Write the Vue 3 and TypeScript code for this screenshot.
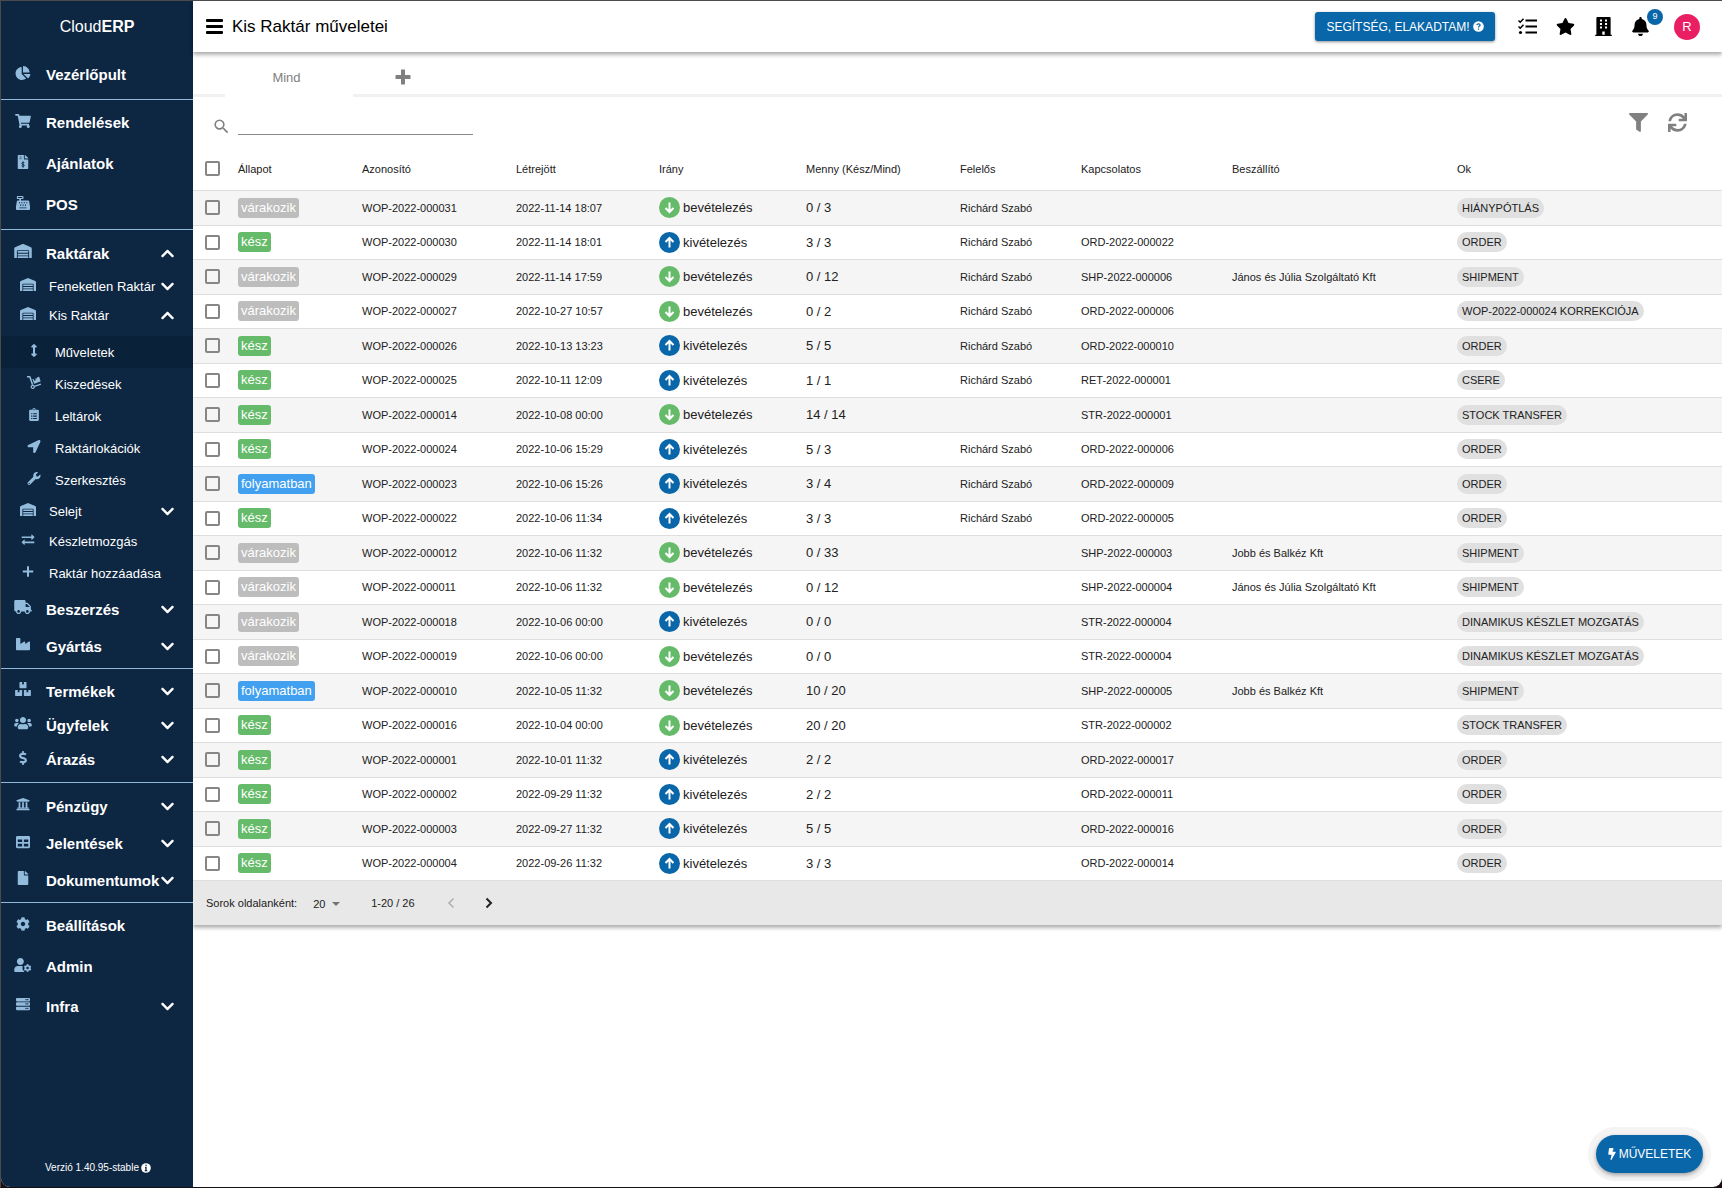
<script setup lang="ts">
import { ref } from 'vue'

interface NavItem {
  label: string
  icon: string
  level?: 1 | 2 | 3
  size: 28 | 30 | 32 | 34 | 36 | 37 | 38 | 41
  chevron?: 'up' | 'down'
  active?: boolean
  first?: boolean
}

interface Operation {
  state: 'várakozik' | 'kész' | 'folyamatban'
  id: string
  created: string
  dir: 'in' | 'out'
  qty: string
  owner: string
  related: string
  supplier: string
  reason: string
}

const sections: { roomy: boolean; items: NavItem[] }[] = [
  { roomy: false, items: [{ label: 'Vezérlőpult', icon: 'pie', size: 41 }] },
  {
    roomy: false,
    items: [
      { label: 'Rendelések', icon: 'cart', size: 41 },
      { label: 'Ajánlatok', icon: 'invoice', size: 41 },
      { label: 'POS', icon: 'register', size: 41 },
    ],
  },
  {
    roomy: true,
    items: [
      { label: 'Raktárak', icon: 'warehouse', size: 38, chevron: 'up' },
      { label: 'Feneketlen Raktár', icon: 'warehouse', level: 2, size: 28, chevron: 'down' },
      { label: 'Kis Raktár', icon: 'warehouse', level: 2, size: 30, chevron: 'up' },
      { label: 'Műveletek', icon: 'arrows-v', level: 3, size: 32, active: true, first: true },
      { label: 'Kiszedések', icon: 'dolly', level: 3, size: 32 },
      { label: 'Leltárok', icon: 'clipboard', level: 3, size: 32 },
      { label: 'Raktárlokációk', icon: 'location', level: 3, size: 32 },
      { label: 'Szerkesztés', icon: 'wrench', level: 3, size: 32 },
      { label: 'Selejt', icon: 'warehouse', level: 2, size: 30, chevron: 'down' },
      { label: 'Készletmozgás', icon: 'exchange', level: 2, size: 30 },
      { label: 'Raktár hozzáadása', icon: 'plus-thin', level: 2, size: 34 },
      { label: 'Beszerzés', icon: 'truck', size: 38, chevron: 'down' },
      { label: 'Gyártás', icon: 'industry', size: 36, chevron: 'down' },
    ],
  },
  {
    roomy: true,
    items: [
      { label: 'Termékek', icon: 'boxes', size: 36, chevron: 'down' },
      { label: 'Ügyfelek', icon: 'users', size: 32, chevron: 'down' },
      { label: 'Árazás', icon: 'dollar', size: 37, chevron: 'down' },
    ],
  },
  {
    roomy: true,
    items: [
      { label: 'Pénzügy', icon: 'bank', size: 38, chevron: 'down' },
      { label: 'Jelentések', icon: 'table', size: 37, chevron: 'down' },
      { label: 'Dokumentumok', icon: 'file', size: 36, chevron: 'down' },
    ],
  },
  {
    roomy: false,
    items: [
      { label: 'Beállítások', icon: 'cog', size: 41 },
      { label: 'Admin', icon: 'user-cog', size: 41 },
      { label: 'Infra', icon: 'server', size: 36, chevron: 'down' },
    ],
  },
]

const stateClass = { várakozik: 'waiting', kész: 'done', folyamatban: 'progress' }

function op(
  state: Operation['state'], num: string, created: string, dir: Operation['dir'], qty: string,
  owned: boolean, related: string, supplier: string, reason: string,
): Operation {
  return { state, id: `WOP-2022-0000${num}`, created, dir, qty, owner: owned ? 'Richárd Szabó' : '', related, supplier, reason }
}

const rows: Operation[] = [
  op('várakozik', '31', '2022-11-14 18:07', 'in', '0 / 3', true, '', '', 'HIÁNYPÓTLÁS'),
  op('kész', '30', '2022-11-14 18:01', 'out', '3 / 3', true, 'ORD-2022-000022', '', 'ORDER'),
  op('várakozik', '29', '2022-11-14 17:59', 'in', '0 / 12', true, 'SHP-2022-000006', 'János és Júlia Szolgáltató Kft', 'SHIPMENT'),
  op('várakozik', '27', '2022-10-27 10:57', 'in', '0 / 2', true, 'ORD-2022-000006', '', 'WOP-2022-000024 KORREKCIÓJA'),
  op('kész', '26', '2022-10-13 13:23', 'out', '5 / 5', true, 'ORD-2022-000010', '', 'ORDER'),
  op('kész', '25', '2022-10-11 12:09', 'out', '1 / 1', true, 'RET-2022-000001', '', 'CSERE'),
  op('kész', '14', '2022-10-08 00:00', 'in', '14 / 14', false, 'STR-2022-000001', '', 'STOCK TRANSFER'),
  op('kész', '24', '2022-10-06 15:29', 'out', '5 / 3', true, 'ORD-2022-000006', '', 'ORDER'),
  op('folyamatban', '23', '2022-10-06 15:26', 'out', '3 / 4', true, 'ORD-2022-000009', '', 'ORDER'),
  op('kész', '22', '2022-10-06 11:34', 'out', '3 / 3', true, 'ORD-2022-000005', '', 'ORDER'),
  op('várakozik', '12', '2022-10-06 11:32', 'in', '0 / 33', false, 'SHP-2022-000003', 'Jobb és Balkéz Kft', 'SHIPMENT'),
  op('várakozik', '11', '2022-10-06 11:32', 'in', '0 / 12', false, 'SHP-2022-000004', 'János és Júlia Szolgáltató Kft', 'SHIPMENT'),
  op('várakozik', '18', '2022-10-06 00:00', 'out', '0 / 0', false, 'STR-2022-000004', '', 'DINAMIKUS KÉSZLET MOZGATÁS'),
  op('várakozik', '19', '2022-10-06 00:00', 'in', '0 / 0', false, 'STR-2022-000004', '', 'DINAMIKUS KÉSZLET MOZGATÁS'),
  op('folyamatban', '10', '2022-10-05 11:32', 'in', '10 / 20', false, 'SHP-2022-000005', 'Jobb és Balkéz Kft', 'SHIPMENT'),
  op('kész', '16', '2022-10-04 00:00', 'in', '20 / 20', false, 'STR-2022-000002', '', 'STOCK TRANSFER'),
  op('kész', '01', '2022-10-01 11:32', 'out', '2 / 2', false, 'ORD-2022-000017', '', 'ORDER'),
  op('kész', '02', '2022-09-29 11:32', 'out', '2 / 2', false, 'ORD-2022-000011', '', 'ORDER'),
  op('kész', '03', '2022-09-27 11:32', 'out', '5 / 5', false, 'ORD-2022-000016', '', 'ORDER'),
  op('kész', '04', '2022-09-26 11:32', 'out', '3 / 3', false, 'ORD-2022-000014', '', 'ORDER'),
]

const columns = ['Állapot', 'Azonosító', 'Létrejött', 'Irány', 'Menny (Kész/Mind)', 'Felelős', 'Kapcsolatos', 'Beszállító', 'Ok']

const selected = ref<string[]>([])
const search = ref('')
const pageSize = ref('20')

function toggleAll(e: Event) {
  selected.value = (e.target as HTMLInputElement).checked ? rows.map((r) => r.id) : []
}
</script>

<template>
  <svg class="sprite" aria-hidden="true">
    <symbol id="pie" viewBox="0 0 544 512"><path d="M527.79 288H290.5l158.03 158.03c6.04 6.04 15.98 6.53 22.19.68 38.7-36.46 65.32-85.61 73.13-140.86 1.34-9.46-6.51-17.85-16.06-17.85zm-15.83-64.8C503.72 103.74 408.26 8.28 288.8.04 279.68-.59 272 7.1 272 16.24V240h223.77c9.14 0 16.82-7.68 16.19-16.8zM224 288V50.71c0-9.55-8.39-17.4-17.84-16.06C86.99 51.49-4.1 155.6.14 280.37 4.5 408.51 114.83 513.59 243.03 511.98c50.4-.63 96.97-16.87 135.26-44.03 7.9-5.6 8.42-17.23 1.57-24.08L224 288z" /></symbol>
    <symbol id="cart" viewBox="0 0 576 512"><path d="M528.12 301.319l47.273-208C578.806 78.301 567.391 64 551.99 64H159.208l-9.166-44.81C147.758 8.021 137.93 0 126.529 0H24C10.745 0 0 10.745 0 24v16c0 13.255 10.745 24 24 24h69.883l70.248 343.435C147.325 417.1 136 435.222 136 456c0 30.928 25.072 56 56 56s56-25.072 56-56c0-15.674-6.447-29.835-16.824-40h209.647C430.447 426.165 424 440.326 424 456c0 30.928 25.072 56 56 56s56-25.072 56-56c0-22.172-12.888-41.332-31.579-50.405l5.517-24.276c3.413-15.018-8.002-29.319-23.403-29.319H218.117l-6.545-32h293.145c11.206 0 20.92-7.754 23.403-18.681z" /></symbol>
    <symbol id="invoice" viewBox="0 0 384 512">
      <path d="M224 136V0H24C10.7 0 0 10.7 0 24v464c0 13.3 10.7 24 24 24h336c13.3 0 24-10.7 24-24V160H248c-13.2 0-24-10.8-24-24zm160-14.1v6.1H256V0h6.1c6.4 0 12.5 2.5 17 7l97.9 98c4.5 4.5 7 10.6 7 16.9z" />
      <path d="M64 72h80M64 136h80" stroke="#0d2642" stroke-width="20" />
      <path d="M192 232v232M240 290c-20-18-92-22-92 20 0 48 92 24 92 72 0 42-72 40-98 14" fill="none" stroke="#0d2642" stroke-width="34" />
    </symbol>
    <symbol id="register" viewBox="0 0 512 512"><path fill-rule="evenodd" d="M48 0h208c9 0 16 7 16 16v80c0 9-7 16-16 16h-72v48h264c16 0 29 11 32 27l31 189c1 3 1 5 1 8v96c0 18-14 32-32 32H32c-18 0-32-14-32-32v-96c0-3 0-5 1-8l31-189c3-16 16-27 32-27h56v-48H48c-9 0-16-7-16-16V16C32 7 39 0 48 0zm24 40v32h160V40zm36 184v40h40v-40zm88 0v40h40v-40zm88 0v40h40v-40zm88 0v40h40v-40zM150 312v40h40v-40zm88 0v40h40v-40zm88 0v40h40v-40zM128 416v32h256v-32z" /></symbol>
    <symbol id="warehouse" viewBox="0 0 640 512"><path d="M504 352H136.4c-4.4 0-8 3.6-8 8l-.1 48c0 4.4 3.6 8 8 8H504c4.4 0 8-3.6 8-8v-48c0-4.4-3.6-8-8-8zm0 96H136.1c-4.4 0-8 3.6-8 8l-.1 48c0 4.4 3.6 8 8 8h368c4.4 0 8-3.6 8-8v-48c0-4.4-3.6-8-8-8zm0-192H136.6c-4.4 0-8 3.6-8 8l-.1 48c0 4.4 3.6 8 8 8H504c4.4 0 8-3.6 8-8v-48c0-4.4-3.6-8-8-8zm106.5-139L338.4 3.7a48.15 48.15 0 0 0-36.9 0L29.5 117C11.7 124.5 0 141.9 0 161.3V504c0 4.4 3.6 8 8 8h80c4.4 0 8-3.6 8-8V256c0-17.6 14.6-32 32.6-32h382.8c18 0 32.6 14.4 32.6 32v248c0 4.4 3.6 8 8 8h80c4.4 0 8-3.6 8-8V161.3c0-19.4-11.7-36.8-29.5-44.3z" /></symbol>
    <symbol id="arrows-v" viewBox="0 0 256 512"><path d="M214.059 377.941H168V134.059h46.059c21.382 0 32.09-25.851 16.971-40.971L144.971 7.029c-9.373-9.373-24.568-9.373-33.941 0L24.971 93.088c-15.119 15.119-4.411 40.971 16.971 40.971H88v243.882H41.941c-21.382 0-32.09 25.851-16.971 40.971l86.059 86.059c9.373 9.373 24.568 9.373 33.941 0l86.059-86.059c15.12-15.119 4.412-40.971-16.97-40.971z" /></symbol>
    <symbol id="dolly" viewBox="0 0 576 512">
      <path d="M12 32h100c8 0 14 5 16 12l104 302" fill="none" stroke="currentColor" stroke-width="60" />
      <path d="M300 408l262-88" fill="none" stroke="currentColor" stroke-width="56" />
      <path fill-rule="evenodd" d="M240 344a84 84 0 1 0 .1 0zm0 52a32 32 0 1 1-.1 0z" />
      <path d="M208 140l70-24 26 74 56-20-26-74 34-12 24 20 28-56 52-18c10-3 18 1 21 9l54 160c3 9-1 17-9 20L308 308c-9 3-17-1-20-9l-48-140z" />
    </symbol>
    <symbol id="clipboard" viewBox="0 0 384 512"><path fill-rule="evenodd" d="M336 64h-80a64 64 0 0 0-128 0H48C22 64 0 86 0 112v352c0 26 22 48 48 48h288c26 0 48-22 48-48V112c0-26-22-48-48-48zM192 40a24 24 0 1 1-.1 0zM80 208h48v40H80zm80 0h144v40H160zM80 300h48v40H80zm80 0h144v40H160zM80 392h48v40H80zm80 0h144v40H160z" /></symbol>
    <symbol id="location" viewBox="0 0 512 512"><path d="M444.52 3.52L28.74 195.42c-47.97 22.39-31.98 92.75 19.19 92.75h175.91v175.91c0 51.17 70.36 67.17 92.75 19.19l191.9-415.78c15.99-38.39-25.59-79.97-63.97-63.97z" /></symbol>
    <symbol id="wrench" viewBox="0 0 512 512"><path d="M507.73 109.1c-2.24-9.03-13.54-12.09-20.12-5.51l-74.36 74.36-67.88-11.31-11.31-67.88 74.36-74.36c6.62-6.62 3.43-17.9-5.66-20.16-47.38-11.74-99.55.91-136.58 37.93-39.64 39.64-50.55 97.1-34.05 147.2L18.74 402.76c-24.99 24.99-24.99 65.51 0 90.5 24.99 24.99 65.51 24.99 90.5 0l213.21-213.21c50.12 16.71 107.47 5.68 147.37-34.22 37.07-37.07 49.7-89.32 37.91-136.73zM64 472c-13.25 0-24-10.75-24-24 0-13.26 10.75-24 24-24s24 10.74 24 24c0 13.25-10.75 24-24 24z" /></symbol>
    <symbol id="exchange" viewBox="0 0 512 512"><path d="M8 142h380V72c0-12 14-18 22-10l94 88c8 7 8 19 0 26l-94 88c-8 8-22 2-22-10v-60H8zM504 338H124v-64c0-12-14-18-22-10L8 352c-8 7-8 19 0 26l94 88c8 8 22 2 22-10v-56h380z" /></symbol>
    <symbol id="plus-thin" viewBox="0 0 448 512"><path d="M416 216H264V64c0-9-7-16-16-16h-48c-9 0-16 7-16 16v152H32c-9 0-16 7-16 16v48c0 9 7 16 16 16h152v152c0 9 7 16 16 16h48c9 0 16-7 16-16V296h152c9 0 16-7 16-16v-48c0-9-7-16-16-16z" /></symbol>
    <symbol id="truck" viewBox="0 0 640 512"><path d="M624 352h-16V243.9c0-12.7-5.1-24.9-14.1-33.9L494 110.1c-9-9-21.2-14.1-33.9-14.1H416V48c0-26.5-21.5-48-48-48H48C21.5 0 0 21.5 0 48v320c0 26.5 21.5 48 48 48h16c0 53 43 96 96 96s96-43 96-96h128c0 53 43 96 96 96s96-43 96-96h48c8.8 0 16-7.2 16-16v-32c0-8.8-7.2-16-16-16zM160 464c-26.5 0-48-21.5-48-48s21.5-48 48-48 48 21.5 48 48-21.5 48-48 48zm320 0c-26.5 0-48-21.5-48-48s21.5-48 48-48 48 21.5 48 48-21.5 48-48 48zm80-208H416V144h44.1l99.9 99.9V256z" /></symbol>
    <symbol id="industry" viewBox="0 0 512 512"><path d="M475.115 163.781L336 252.309v-68.28c0-18.916-20.931-30.399-36.885-20.248L160 252.309V56c0-13.255-10.745-24-24-24H24C10.745 32 0 42.745 0 56v400c0 13.255 10.745 24 24 24h464c13.255 0 24-10.745 24-24V184.029c0-18.917-20.931-30.399-36.885-20.248z" /></symbol>
    <symbol id="boxes" viewBox="0 0 576 512"><path d="M560 288h-80v96l-32-21.3-32 21.3v-96h-80c-8.8 0-16 7.2-16 16v192c0 8.8 7.2 16 16 16h224c8.8 0 16-7.2 16-16V304c0-8.8-7.2-16-16-16zm-384-64h224c8.8 0 16-7.2 16-16V16c0-8.8-7.2-16-16-16h-80v96l-32-21.3L256 96V0h-80c-8.8 0-16 7.2-16 16v192c0 8.8 7.2 16 16 16zm64 64h-80v96l-32-21.3L96 384v-96H16c-8.8 0-16 7.2-16 16v192c0 8.8 7.2 16 16 16h224c8.8 0 16-7.2 16-16V304c0-8.8-7.2-16-16-16z" /></symbol>
    <symbol id="users" viewBox="0 0 640 512"><path d="M96 224c35.3 0 64-28.7 64-64s-28.7-64-64-64-64 28.7-64 64 28.7 64 64 64zm448 0c35.3 0 64-28.7 64-64s-28.7-64-64-64-64 28.7-64 64 28.7 64 64 64zm32 32h-64c-17.6 0-33.5 7.1-45.1 18.6 40.3 22.1 68.9 62 75.1 109.4h66c17.7 0 32-14.3 32-32v-32c0-35.3-28.7-64-64-64zm-256 0c61.9 0 112-50.1 112-112S381.9 32 320 32 208 82.1 208 144s50.1 112 112 112zm76.8 32h-8.3c-20.8 10-43.9 16-68.5 16s-47.6-6-68.5-16h-8.3C179.6 288 128 339.6 128 403.2V432c0 26.5 21.5 48 48 48h288c26.5 0 48-21.5 48-48v-28.8c0-63.6-51.6-115.2-115.2-115.2zm-223.7-13.4C161.5 263.1 145.6 256 128 256H64c-35.3 0-64 28.7-64 64v32c0 17.7 14.3 32 32 32h65.9c6.3-47.4 34.9-87.3 75.2-109.4z" /></symbol>
    <symbol id="dollar" viewBox="0 0 288 512"><path d="M209.2 233.4l-108-31.6C88.7 198.2 80 186.5 80 173.5c0-16.3 13.2-29.5 29.5-29.5h66.3c12.2 0 24.2 3.7 34.2 10.5 6.1 4.1 14.3 3.1 19.5-2l34.8-34c7.1-6.9 6.1-18.4-1.8-24.5C238 74.8 207.4 64.1 176 64V16c0-8.8-7.2-16-16-16h-32c-8.8 0-16 7.2-16 16v48h-2.5C45.8 64-5.4 118.7.5 183.6c4.2 46.1 39.4 83.6 83.8 96.6l102.5 30c12.5 3.7 21.2 15.3 21.2 28.3 0 16.3-13.2 29.5-29.5 29.5h-66.3C100 368 88 364.3 78 357.5c-6.1-4.1-14.3-3.1-19.5 2l-34.8 34c-7.1 6.9-6.1 18.4 1.8 24.5 24.5 19.2 55.1 29.9 86.5 30v48c0 8.8 7.2 16 16 16h32c8.8 0 16-7.2 16-16v-48.2c46.6-.9 90.3-28.6 105.7-72.7 21.5-61.6-14.6-124.8-72.5-141.7z" /></symbol>
    <symbol id="bank" viewBox="0 0 512 512"><path d="M496 128v16a8 8 0 0 1-8 8h-24v12c0 6.627-5.373 12-12 12H60c-6.627 0-12-5.373-12-12v-12H24a8 8 0 0 1-8-8v-16a8 8 0 0 1 4.941-7.392l232-88a7.996 7.996 0 0 1 6.118 0l232 88A8 8 0 0 1 496 128zm-24 304H40c-13.255 0-24 10.745-24 24v16a8 8 0 0 0 8 8h464a8 8 0 0 0 8-8v-16c0-13.255-10.745-24-24-24zM96 192v192H60c-6.627 0-12 5.373-12 12v20h416v-20c0-6.627-5.373-12-12-12h-36V192h-64v192h-64V192h-64v192h-64V192H96z" /></symbol>
    <symbol id="table" viewBox="0 0 512 512"><path d="M464 32H48C21.49 32 0 53.49 0 80v352c0 26.51 21.49 48 48 48h416c26.51 0 48-21.49 48-48V80c0-26.51-21.49-48-48-48zM224 416H64v-96h160v96zm0-160H64v-96h160v96zm224 160H288v-96h160v96zm0-160H288v-96h160v96z" /></symbol>
    <symbol id="file" viewBox="0 0 384 512"><path d="M224 136V0H24C10.7 0 0 10.7 0 24v464c0 13.3 10.7 24 24 24h336c13.3 0 24-10.7 24-24V160H248c-13.2 0-24-10.8-24-24zm160-14.1v6.1H256V0h6.1c6.4 0 12.5 2.5 17 7l97.9 98c4.5 4.5 7 10.6 7 16.9z" /></symbol>
    <symbol id="cog" viewBox="0 0 512 512"><path d="M487.4 315.7l-42.6-24.6c4.3-23.2 4.3-47 0-70.2l42.6-24.6c4.9-2.8 7.1-8.6 5.5-14-11.1-35.6-30-67.8-54.7-94.6-3.8-4.1-10-5.1-14.8-2.3L380.8 110c-17.9-15.4-38.5-27.3-60.8-35.1V25.8c0-5.6-3.9-10.5-9.4-11.7-36.7-8.2-74.3-7.8-109.2 0-5.5 1.2-9.4 6.1-9.4 11.7V75c-22.2 7.9-42.8 19.8-60.8 35.1L88.7 85.5c-4.9-2.8-11-1.9-14.8 2.3-24.7 26.7-43.6 58.9-54.7 94.6-1.7 5.4.6 11.2 5.5 14L67.3 221c-4.3 23.2-4.3 47 0 70.2l-42.6 24.6c-4.9 2.8-7.1 8.6-5.5 14 11.1 35.6 30 67.8 54.7 94.6 3.8 4.1 10 5.1 14.8 2.3l42.6-24.6c17.9 15.4 38.5 27.3 60.8 35.1v49.2c0 5.6 3.9 10.5 9.4 11.7 36.7 8.2 74.3 7.8 109.2 0 5.5-1.2 9.4-6.1 9.4-11.7v-49.2c22.2-7.9 42.8-19.8 60.8-35.1l42.6 24.6c4.9 2.8 11 1.9 14.8-2.3 24.7-26.7 43.6-58.9 54.7-94.6 1.5-5.5-.7-11.3-5.6-14.1zM256 336c-44.1 0-80-35.9-80-80s35.9-80 80-80 80 35.9 80 80-35.9 80-80 80z" /></symbol>
    <symbol id="user-cog" viewBox="0 0 640 512">
      <path d="M224 256c70.7 0 128-57.3 128-128S294.7 0 224 0 96 57.3 96 128s57.3 128 128 128zM134 288h150c24 0 32 10 26 24-24 60-8 130 50 174 12 12 6 26-12 26H48c-26 0-48-22-48-48v-42C0 348 60 288 134 288z" />
      <path transform="translate(344 224) scale(.56)" d="M487.4 315.7l-42.6-24.6c4.3-23.2 4.3-47 0-70.2l42.6-24.6c4.9-2.8 7.1-8.6 5.5-14-11.1-35.6-30-67.8-54.7-94.6-3.8-4.1-10-5.1-14.8-2.3L380.8 110c-17.9-15.4-38.5-27.3-60.8-35.1V25.8c0-5.6-3.9-10.5-9.4-11.7-36.7-8.2-74.3-7.8-109.2 0-5.5 1.2-9.4 6.1-9.4 11.7V75c-22.2 7.9-42.8 19.8-60.8 35.1L88.7 85.5c-4.9-2.8-11-1.9-14.8 2.3-24.7 26.7-43.6 58.9-54.7 94.6-1.7 5.4.6 11.2 5.5 14L67.3 221c-4.3 23.2-4.3 47 0 70.2l-42.6 24.6c-4.9 2.8-7.1 8.6-5.5 14 11.1 35.6 30 67.8 54.7 94.6 3.8 4.1 10 5.1 14.8 2.3l42.6-24.6c17.9 15.4 38.5 27.3 60.8 35.1v49.2c0 5.6 3.9 10.5 9.4 11.7 36.7 8.2 74.3 7.8 109.2 0 5.5-1.2 9.4-6.1 9.4-11.7v-49.2c22.2-7.9 42.8-19.8 60.8-35.1l42.6 24.6c4.9 2.8 11 1.9 14.8-2.3 24.7-26.7 43.6-58.9 54.7-94.6 1.5-5.5-.7-11.3-5.6-14.1zM256 336c-44.1 0-80-35.9-80-80s35.9-80 80-80 80 35.9 80 80-35.9 80-80 80z" />
    </symbol>
    <symbol id="server" viewBox="0 0 512 512"><path fill-rule="evenodd" d="M32 32h448c18 0 32 14 32 32v64c0 18-14 32-32 32H32c-18 0-32-14-32-32V64c0-18 14-32 32-32zm400 40a24 24 0 1 0 .1 0zm-64 0a24 24 0 1 0 .1 0zM32 192h448c18 0 32 14 32 32v64c0 18-14 32-32 32H32c-18 0-32-14-32-32v-64c0-18 14-32 32-32zm400 40a24 24 0 1 0 .1 0zm-64 0a24 24 0 1 0 .1 0zM32 352h448c18 0 32 14 32 32v64c0 18-14 32-32 32H32c-18 0-32-14-32-32v-64c0-18 14-32 32-32zm400 40a24 24 0 1 0 .1 0zm-64 0a24 24 0 1 0 .1 0z" /></symbol>
    <symbol id="chevron" viewBox="0 0 448 512"><path d="M207.029 381.476L12.686 187.132c-9.373-9.373-9.373-24.569 0-33.941l22.667-22.667c9.357-9.357 24.522-9.375 33.901-.04L224 284.505l154.745-154.021c9.379-9.335 24.544-9.317 33.901.04l22.667 22.667c9.373 9.373 9.373 24.569 0 33.941L240.971 381.476c-9.373 9.372-24.569 9.372-33.942 0z" /></symbol>
    <symbol id="star" viewBox="0 0 576 512"><path d="M259.3 17.8L194 150.2 47.9 171.5c-26.2 3.8-36.7 36.1-17.7 54.6l105.7 103-25 145.5c-4.5 26.3 23.2 46 46.4 33.7L288 439.6l130.7 68.7c23.2 12.2 50.9-7.4 46.4-33.7l-25-145.5 105.7-103c19-18.5 8.5-50.8-17.7-54.6L382 150.2 316.7 17.8c-11.7-23.6-45.6-23.9-57.4 0z" /></symbol>
    <symbol id="building" viewBox="0 0 448 512"><path fill-rule="evenodd" d="M436 480h-20V24c0-13-11-24-24-24H56C43 0 32 11 32 24v456H12c-7 0-12 5-12 12v20h448v-20c0-7-5-12-12-12zM128 64h56v56h-56zm136 0h56v56h-56zM128 160h56v56h-56zm136 0h56v56h-56zM128 256h56v56h-56zm136 0h56v56h-56zM192 392h64v88h-64z" /></symbol>
    <symbol id="bell" viewBox="0 0 448 512"><path d="M224 512c35.32 0 63.97-28.65 63.97-64H160.03c0 35.35 28.65 64 63.97 64zm215.39-149.71c-19.32-20.76-55.47-51.99-55.47-154.29 0-77.7-54.48-139.9-127.94-155.16V32c0-17.67-14.32-32-31.98-32s-31.98 14.33-31.98 32v20.84C118.56 68.1 64.08 130.3 64.08 208c0 102.3-36.15 133.53-55.47 154.29-6 6.45-8.66 14.16-8.61 21.71.11 16.4 12.98 32 32.1 32h383.8c19.12 0 32-15.6 32.1-32 .05-7.55-2.61-15.27-8.61-21.71z" /></symbol>
    <symbol id="filter" viewBox="0 0 512 512"><path d="M487.976 0H24.028C2.71 0-8.047 25.866 7.058 40.971L192 225.941V432c0 7.831 3.821 15.17 10.237 19.662l80 55.98C298.02 518.69 320 507.493 320 487.98V225.941l184.947-184.97C520.021 25.896 509.338 0 487.976 0z" /></symbol>
    <symbol id="sync" viewBox="0 0 512 512"><path d="M440.65 12.57l4 82.77A247.16 247.16 0 0 0 255.83 8C134.73 8 33.91 94.92 12.29 209.82A12 12 0 0 0 24.09 224h49.05a12 12 0 0 0 11.67-9.26 175.91 175.91 0 0 1 317-56.94l-101.46-4.86a12 12 0 0 0-12.57 12v47.41a12 12 0 0 0 12 12H500a12 12 0 0 0 12-12V12a12 12 0 0 0-12-12h-47.37a12 12 0 0 0-11.98 12.57zM255.83 432a175.61 175.61 0 0 1-146-77.8l101.8 4.87a12 12 0 0 0 12.57-12v-47.4a12 12 0 0 0-12-12H12a12 12 0 0 0-12 12V500a12 12 0 0 0 12 12h47.35a12 12 0 0 0 12-12.6l-4.15-82.57A247.17 247.17 0 0 0 255.83 504c121.11 0 221.93-86.92 243.55-201.82a12 12 0 0 0-11.8-14.18h-49.05a12 12 0 0 0-11.67 9.26A175.86 175.86 0 0 1 255.83 432z" /></symbol>
    <symbol id="bars" viewBox="0 0 17 15"><rect width="17" height="3" rx="1" /><rect y="6" width="17" height="3" rx="1" /><rect y="12" width="17" height="3" rx="1" /></symbol>
    <symbol id="tasks" viewBox="0 0 19 17">
      <path d="M7.500 2.500H19M7.500 8.500H19M7.500 14.500H19" stroke="currentColor" stroke-width="2" />
      <path d="M.5 2.500l1.700 1.700L5.500 .7M.5 8.500l1.700 1.700 3.300-3.500" fill="none" stroke="currentColor" stroke-width="1.500" />
      <circle cx="2.500" cy="14.500" r="1.600" />
    </symbol>
    <symbol id="plus" viewBox="0 0 16 16"><path d="M6.500 .5h3a.5.5 0 0 1 .5.5v5h5a.5.5 0 0 1 .5.5v3a.5.5 0 0 1-.5.5h-5v5a.5.5 0 0 1-.5.5h-3A.5.5 0 0 1 6 15v-5H1a.5.5 0 0 1-.5-.5v-3A.5.5 0 0 1 1 6h5V1a.5.5 0 0 1 .5-.5z" /></symbol>
    <symbol id="magnifier" viewBox="0 0 24 24"><path d="M15.500 14h-.79l-.28-.27A6.470 6.470 0 0 0 16 9.500 6.500 6.500 0 1 0 9.500 16c1.610 0 3.090-.59 4.230-1.570l.27.28v.79l5 4.990L20.490 19l-4.990-5zm-6 0C7.010 14 5 11.990 5 9.500S7.010 5 9.500 5 14 7.010 14 9.500 11.990 14 9.500 14z" /></symbol>
    <symbol id="bolt" viewBox="0 0 320 512"><path d="M296 160H180.6l42.6-129.8C227.2 15 215.7 0 200 0H56C44 0 33.800 8.900 32.200 20.800l-32 240C-1.700 275.200 9.500 288 24 288h118.700L96.600 482.500c-3.600 15.200 8 29.500 23.300 29.500 8.400 0 16.400-4.400 20.800-12l176-304c9.300-15.900-2.200-36-20.700-36z" /></symbol>
    <symbol id="help" viewBox="0 0 12 12"><circle cx="6" cy="6" r="5.800" /><path d="M4.200 4.500c.2-2 3.600-1.900 3.500 0 0 1.200-1.700 1.200-1.700 2.500M6 8.100v1.500" fill="none" stroke="#0966a9" stroke-width="1.400" /></symbol>
    <symbol id="info" viewBox="0 0 12 12"><circle cx="6" cy="6" r="5.800" /><path d="M6 2.200v1.700M4.800 5.500H6v3M4.500 9h3" fill="none" stroke="#0d2642" stroke-width="1.500" /></symbol>
    <symbol id="disc-up" viewBox="0 0 21 21"><circle cx="10.500" cy="10.500" r="10.500" fill="#0966a9" /><path d="M10.500 15.500V6M6.500 10l4-4 4 4" fill="none" stroke="#fff" stroke-width="2" /></symbol>
    <symbol id="disc-down" viewBox="0 0 21 21"><circle cx="10.500" cy="10.500" r="10.500" fill="#66bb6a" /><path d="M10.500 5.500V15M6.500 11l4 4 4-4" fill="none" stroke="#fff" stroke-width="2" /></symbol>
    <symbol id="prev" viewBox="0 0 8 12"><path d="M6.500 1.500L2 6l4.500 4.500" fill="none" stroke="currentColor" stroke-width="1.600" /></symbol>
    <symbol id="next" viewBox="0 0 8 12"><path d="M1.500 1.500L6 6l-4.500 4.500" fill="none" stroke="currentColor" stroke-width="2" /></symbol>
  </svg>

  <div class="window">
    <div class="shell">
      <aside class="sidebar">
        <div class="brand">Cloud<b>ERP</b></div>
        <nav>
          <ul v-for="(section, i) in sections" :key="i" class="section" :class="{ roomy: section.roomy }">
            <li v-for="item in section.items" :key="item.label" :class="{ first: item.first }">
              <component
                :is="item.chevron ? 'button' : 'a'"
                :href="item.chevron ? undefined : '#'"
                :type="item.chevron ? 'button' : undefined"
                class="nav-row"
                :class="[`level-${item.level ?? 1}`, `size-${item.size}`, { active: item.active }]"
              >
                <svg class="nav-icon" aria-hidden="true"><use :href="`#${item.icon}`" /></svg>
                <span class="nav-label">{{ item.label }}</span>
                <svg v-if="item.chevron" class="nav-chevron" :class="item.chevron" aria-hidden="true"><use href="#chevron" /></svg>
              </component>
            </li>
          </ul>
        </nav>
        <div class="version">Verzió 1.40.95-stable <svg aria-hidden="true"><use href="#info" /></svg></div>
      </aside>

      <div class="content">
        <header class="topbar">
          <button type="button" class="icon-btn" aria-label="Menü"><svg class="bars"><use href="#bars" /></svg></button>
          <h1>Kis Raktár műveletei</h1>
          <button type="button" class="help-btn">SEGÍTSÉG, ELAKADTAM!<svg aria-hidden="true"><use href="#help" /></svg></button>
          <div class="tools">
            <button type="button" class="icon-btn" aria-label="Feladatok"><svg><use href="#tasks" /></svg></button>
            <button type="button" class="icon-btn" aria-label="Kedvencek"><svg><use href="#star" /></svg></button>
            <button type="button" class="icon-btn" aria-label="Cégek"><svg><use href="#building" /></svg></button>
            <button type="button" class="icon-btn bell" aria-label="Értesítések"><svg><use href="#bell" /></svg><span class="badge">9</span></button>
          </div>
          <button type="button" class="avatar" aria-label="Profil">R</button>
        </header>

        <main>
          <div class="tabs">
            <button type="button" class="tab">Mind</button>
            <button type="button" class="icon-btn add-tab" aria-label="Új nézet"><svg><use href="#plus" /></svg></button>
          </div>

          <div class="toolbar">
            <label class="search">
              <svg aria-hidden="true"><use href="#magnifier" /></svg>
              <input v-model="search" type="text" aria-label="Keresés" />
            </label>
            <div class="toolbar-actions">
              <button type="button" class="icon-btn" aria-label="Szűrés"><svg><use href="#filter" /></svg></button>
              <button type="button" class="icon-btn" aria-label="Frissítés"><svg><use href="#sync" /></svg></button>
            </div>
          </div>

          <div class="card">
            <table>
              <colgroup>
                <col class="c-check" /><col class="c-state" /><col class="c-id" /><col class="c-created" /><col class="c-dir" />
                <col class="c-qty" /><col class="c-owner" /><col class="c-related" /><col class="c-supplier" /><col class="c-reason" />
              </colgroup>
              <thead>
                <tr>
                  <th class="check"><input type="checkbox" aria-label="Összes kijelölése" @change="toggleAll" /></th>
                  <th v-for="c in columns" :key="c" scope="col">{{ c }}</th>
                </tr>
              </thead>
              <tbody>
                <tr v-for="r in rows" :key="r.id">
                  <td class="check"><input v-model="selected" type="checkbox" :value="r.id" :aria-label="r.id" /></td>
                  <td><span class="state" :class="stateClass[r.state]">{{ r.state }}</span></td>
                  <td>{{ r.id }}</td>
                  <td>{{ r.created }}</td>
                  <td>
                    <span class="dir"><svg aria-hidden="true"><use :href="r.dir === 'in' ? '#disc-down' : '#disc-up'" /></svg>{{ r.dir === 'in' ? 'bevételezés' : 'kivételezés' }}</span>
                  </td>
                  <td class="qty">{{ r.qty }}</td>
                  <td>{{ r.owner }}</td>
                  <td>{{ r.related }}</td>
                  <td>{{ r.supplier }}</td>
                  <td><span class="chip">{{ r.reason }}</span></td>
                </tr>
              </tbody>
            </table>

            <div class="pager">
              <label for="page-size">Sorok oldalanként:</label>
              <span class="select">
                <select id="page-size" v-model="pageSize">
                  <option>10</option>
                  <option>20</option>
                  <option>50</option>
                </select>
              </span>
              <span class="range">1-20 / 26</span>
              <button type="button" class="icon-btn prev" aria-label="Előző oldal" disabled><svg><use href="#prev" /></svg></button>
              <button type="button" class="icon-btn" aria-label="Következő oldal"><svg><use href="#next" /></svg></button>
            </div>
          </div>
        </main>
      </div>

      <button type="button" class="fab"><svg aria-hidden="true"><use href="#bolt" /></svg>MŰVELETEK</button>
    </div>
  </div>
</template>

<style>
body {
  background: #000;
}
</style>

<style scoped>
.sprite {
  position: absolute;
  width: 0;
  height: 0;
}

.window {
  box-sizing: border-box;
  display: flex;
  min-height: 100vh;
  border: solid #4a4a4a;
  border-width: 1px 0 1px 1px;
  border-bottom-color: #111;
  background: #1c1015;
  font-family: "Liberation Sans", Arial, Helvetica, sans-serif;
  font-size: 11px;
  color: #212121;
}

.shell {
  position: relative;
  display: flex;
  flex: 1;
  min-width: 0;
  overflow: hidden;
  border-radius: 0 0 9px 9px;
  background: #fff;
}

button,
input,
select {
  font-family: inherit;
}

button {
  padding: 0;
  border: 0;
  background: none;
  cursor: pointer;
}

svg {
  fill: currentColor;
  flex: none;
}

/* Sidebar */
.sidebar {
  display: flex;
  flex-direction: column;
  flex: none;
  width: 192px;
  background: #0d2642;
  color: #fff;
}

.brand {
  height: 51px;
  line-height: 51px;
  text-align: center;
  font-size: 16px;
}

.section {
  margin: 0;
  padding: 3px 0;
  list-style: none;
}

.section.roomy {
  padding: 4px 0;
}

.section + .section {
  border-top: 1px solid #8fbadb;
}

.first {
  padding-top: 6px;
}

.nav-row {
  box-sizing: border-box;
  display: flex;
  align-items: center;
  width: 100%;
  padding: 0 19px 0 13px;
  color: #fff;
  text-align: left;
  text-decoration: none;
  white-space: nowrap;
  font-size: 13px;
}

.size-28 { height: 28px; }
.size-30 { height: 30px; }
.size-32 { height: 32px; }
.size-34 { height: 34px; }
.size-36 { height: 36px; }
.size-37 { height: 37px; }
.size-38 { height: 38px; }
.size-41 { height: 41px; padding-bottom: 2px; }

.nav-icon {
  width: 18px;
  height: 14px;
  margin: 0 14px 4px 0;
  color: #93bbdc;
}

.level-1 {
  font-size: 15px;
  font-weight: bold;
}

.level-2 {
  padding-left: 19px;
}

.level-2 .nav-icon {
  width: 16px;
  height: 13px;
  margin-right: 13px;
}

.level-3 {
  padding-left: 25px;
}

.level-3 .nav-icon {
  width: 16px;
  height: 13px;
  margin-right: 13px;
}

.active {
  background: #0a213a;
}

.nav-label {
  flex: 1;
  min-width: 0;
}

.nav-chevron {
  width: 13px;
  height: 15px;
}

.nav-chevron.up {
  transform: rotate(180deg);
}

.version {
  display: flex;
  align-items: center;
  gap: 2px;
  margin-top: auto;
  padding: 0 0 13px 44px;
  font-size: 10px;
  line-height: 12px;
}

.version svg {
  width: 10px;
  height: 10px;
}

/* Top bar */
.content {
  flex: 1;
  min-width: 0;
}

.topbar {
  position: relative;
  display: flex;
  align-items: center;
  height: 51px;
  padding: 0 22px 0 13px;
  background: #fff;
  color: #000;
  box-shadow: 0 2px 4px rgba(0, 0, 0, 0.3), 0 4px 4px rgba(0, 0, 0, 0.08);
}

h1 {
  flex: 1;
  margin: 0 0 0 9px;
  font-size: 17px;
  font-weight: normal;
}

.icon-btn {
  display: flex;
  align-items: center;
  justify-content: center;
  color: inherit;
}

.icon-btn svg {
  width: 19px;
  height: 19px;
}

.icon-btn .bars {
  width: 17px;
  height: 15px;
}

.help-btn {
  display: flex;
  align-items: center;
  justify-content: center;
  gap: 3px;
  width: 180px;
  height: 29px;
  border-radius: 3px;
  background: #0966a9;
  color: #fff;
  font-size: 12px;
  box-shadow: 0 1px 3px rgba(0, 0, 0, 0.45);
}

.help-btn svg {
  width: 11px;
  height: 11px;
}

.tools {
  display: flex;
  gap: 19px;
  margin: 0 26px 0 23px;
}

.bell {
  position: relative;
  width: 16px;
}

.badge {
  position: absolute;
  top: -8px;
  left: 15px;
  width: 16px;
  height: 16px;
  border-radius: 8px;
  background: #0966a9;
  color: #fff;
  font-size: 9px;
  line-height: 15px;
  text-align: center;
}

.avatar {
  width: 26px;
  height: 26px;
  border-radius: 13px;
  background: #e91e63;
  color: #fff;
  font-size: 13px;
}

/* Tabs and toolbar */
.tabs {
  display: flex;
  height: 42px;
  padding-left: 32px;
  border-bottom: 3px solid #f1f1f1;
  color: #808080;
}

.tab {
  width: 128px;
  height: 45px;
  padding: 5px 5px 0 0;
  background: #fff;
  color: #808080;
  font-size: 13px;
}

.add-tab {
  width: 100px;
  padding-top: 7px;
}

.add-tab svg {
  width: 16px;
  height: 16px;
}

.toolbar {
  display: flex;
  align-items: center;
  justify-content: space-between;
  height: 51px;
  padding: 0 35px 0 19px;
  color: #808080;
}

.search {
  display: flex;
  align-items: center;
  gap: 7px;
}

.search svg {
  width: 19px;
  height: 19px;
  margin-top: 8px;
}

.search input {
  box-sizing: border-box;
  width: 235px;
  height: 24px;
  padding: 0;
  border: 0;
  border-bottom: 1px solid #8a8a8a;
  outline: 0;
  background: none;
  font-size: 13px;
}

.toolbar-actions {
  display: flex;
  gap: 20px;
}

/* Table */
.card {
  box-shadow: 0 2px 4px rgba(0, 0, 0, 0.3), 0 4px 4px rgba(0, 0, 0, 0.08);
  clip-path: inset(0 0 -10px 0);
}

table {
  width: 100%;
  table-layout: fixed;
  border-collapse: collapse;
}

.c-check { width: 45px; }
.c-state { width: 124px; }
.c-id { width: 154px; }
.c-created { width: 143px; }
.c-dir { width: 147px; }
.c-qty { width: 154px; }
.c-owner { width: 121px; }
.c-related { width: 151px; }
.c-supplier { width: 225px; }
.c-reason { width: 265px; }

th,
td {
  box-sizing: border-box;
  padding: 0;
  border-bottom: 1px solid #dedede;
  text-align: left;
  font-weight: normal;
  white-space: nowrap;
  vertical-align: middle;
}

th {
  height: 42px;
}

tbody tr:nth-child(odd) td {
  height: 35px;
  background: #f5f5f5;
}

tbody tr:nth-child(even) td {
  height: 34px;
}

.check {
  padding-left: 12px;
}

.check input {
  appearance: none;
  display: block;
  box-sizing: border-box;
  width: 15px;
  height: 15px;
  margin: 0;
  border: 2px solid #868686;
  border-radius: 2px;
}

.check input:checked {
  background: #0966a9;
  border-color: #0966a9;
}

.state {
  display: inline-block;
  height: 20px;
  padding: 0 3px;
  border-radius: 3px;
  color: #fff;
  font-size: 13px;
  line-height: 20px;
}

.waiting { background: #bdbdbd; }
.done { background: #66bb6a; }
.progress { background: #42a0f0; }

.dir {
  display: flex;
  align-items: center;
  gap: 3px;
  font-size: 13px;
}

.dir svg {
  width: 21px;
  height: 21px;
}

.qty {
  font-size: 13px;
}

.chip {
  display: inline-block;
  height: 20px;
  padding: 0 5px;
  border-radius: 10px;
  background: #e0e0e0;
  line-height: 20px;
}

/* Pager */
.pager {
  display: flex;
  align-items: center;
  height: 44px;
  padding-left: 13px;
  background: #e8e8e8;
}

.select {
  position: relative;
  margin: 3px 0 0 16px;
}

.select::after {
  content: "";
  position: absolute;
  top: 6px;
  right: 0;
  border: 4px solid transparent;
  border-top-color: #757575;
  border-bottom: 0;
  pointer-events: none;
}

.select select {
  appearance: none;
  display: block;
  width: 27px;
  height: 16px;
  padding: 0;
  border: 0;
  background: none;
  color: inherit;
  font-size: 11px;
}

.range {
  margin: 0 32px 0 31px;
}

.pager .icon-btn svg {
  width: 8px;
  height: 12px;
}

.pager .prev {
  margin-right: 30px;
  color: #b0b0b0;
}

.fab {
  position: absolute;
  right: 19px;
  bottom: 14px;
  display: flex;
  align-items: center;
  justify-content: center;
  gap: 3px;
  width: 107px;
  height: 38px;
  border-radius: 19px;
  background: #0966a9;
  color: #fff;
  font-size: 12px;
  box-shadow: 0 2px 4px rgba(0, 0, 0, 0.35), 0 0 0 8px #f4f4f4;
}

.fab svg {
  width: 8px;
  height: 12px;
}
</style>
